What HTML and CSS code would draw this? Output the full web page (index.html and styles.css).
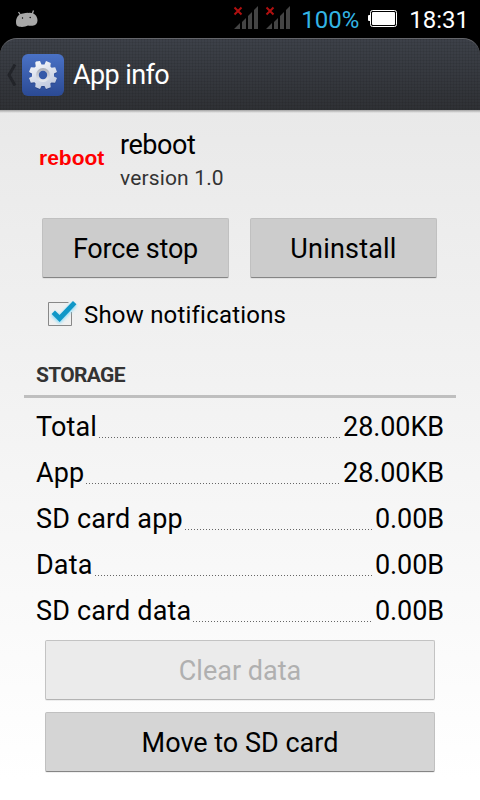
FILE: index.html
```
<!DOCTYPE html>
<html lang="en">
<head>
    <meta charset="UTF-8">
    <meta name="viewport" content="width=device-width, initial-scale=1.0">
    <title>App info</title>
    <link rel="stylesheet" href="styles.css">
</head>
<body>
    <div class="status-bar">
        <svg class="droid" width="24" height="20" viewBox="0 0 24 20">
            <path d="M3.500 3l2 3M18.500 1.500l-1.500 4" stroke="#a8a8a8" stroke-width="1.3"/>
            <path d="M1 13C1 8 4 5 8 4.500q3-.8 6-.6C19 3.500 22.500 7 22.500 11.500c0 3-2 5-5 5.200-2 .2-3 .2-4.500-.1-2 1.300-5.500 1.500-8.500 1.200C2 17.500 1 16 1 13z" fill="#a8a8a8"/>
            <circle cx="7.500" cy="9" r=".7"/>
            <circle cx="15.200" cy="8.500" r=".7"/>
        </svg>
        <div class="status-right">
            <svg class="signal" width="26" height="24" viewBox="0 0 26 24">
                <path d="M1 23h6v-6zM9 23h4V12l-4 4zM15 23h4V6l-4 4zM21 23h4V0l-4 4z" fill="#444"/>
                <path d="M1.500 1.500l7 7M8.500 1.500l-7 7" stroke="#b01010" stroke-width="2"/>
            </svg>
            <svg class="signal" width="26" height="24" viewBox="0 0 26 24">
                <path d="M1 23h6v-6zM9 23h4V12l-4 4zM15 23h4V6l-4 4zM21 23h4V0l-4 4z" fill="#444"/>
                <path d="M1.500 1.500l7 7M8.500 1.500l-7 7" stroke="#b01010" stroke-width="2"/>
            </svg>
            <span class="percent">100%</span>
            <svg class="battery" width="29" height="18" viewBox="0 0 29 18">
                <rect x="2.500" y=".5" width="26" height="16" rx="2" fill="#000" stroke="#fff"/>
                <rect x="4" y="2" width="23" height="13" rx="1" fill="#fff"/>
                <rect x="0" y="5" width="3" height="6" rx="1" fill="#fff"/>
            </svg>
            <span class="clock">18:31</span>
        </div>
    </div>

    <div class="action-bar">
        <svg class="back" width="11" height="22" viewBox="0 0 11 22">
            <path d="M9 .5L3 11l6 10.500" fill="none" stroke="#222429" stroke-width="3"/>
        </svg>
        <svg class="settings-icon" width="42" height="42" viewBox="0 0 42 42">
            <defs>
                <linearGradient id="tile" x1="0" y1="0" x2="0" y2="1">
                    <stop offset="0" stop-color="#4a72c6"/>
                    <stop offset="1" stop-color="#2b4a94"/>
                </linearGradient>
                <linearGradient id="metal" gradientUnits="userSpaceOnUse" x1="14" y1="7" x2="26" y2="35">
                    <stop offset="0" stop-color="#f6f7fa"/>
                    <stop offset="1" stop-color="#bdc7dd"/>
                </linearGradient>
                <linearGradient id="ring" x1="0" y1="0" x2="0" y2="1">
                    <stop offset="0" stop-color="#a9adb8"/>
                    <stop offset="1" stop-color="#e8ebf1"/>
                </linearGradient>
                <path id="gear" d="M14 7.500L18 7l1.500 3.500h3L24 7l4.800 1.900-.4 3.600 1.200 1.200 3.600-.5L35 18l-3 1.500v3L35 24l-1.900 4.800-3.600-.4-1.200 1.200.5 3.600L24 35l-1.500-3h-3L18 35l-4.800-1.900.4-3.600-1.200-1.200-3.600.5L7 24l3-1.500v-3L7 18l1.900-4.800 3.600.4 1.200-1.200-.5-3.600z"/>
            </defs>
            <rect width="42" height="42" rx="6" fill="url(#tile)"/>
            <use href="#gear" fill="#1f3672" opacity=".45" transform="translate(0 1)"/>
            <use href="#gear" fill="url(#metal)"/>
            <circle cx="21" cy="21" r="7" fill="url(#ring)"/>
            <circle cx="21" cy="21" r="4.200" fill="#3459a8"/>
        </svg>
        <h1>App info</h1>
    </div>

    <div class="content">
        <div class="app-header">
            <div class="app-icon">reboot</div>
            <div>
                <div class="app-name">reboot</div>
                <div class="app-version">version 1.0</div>
            </div>
        </div>

        <div class="button-row">
            <button class="stop">Force stop</button>
            <button class="uninstall">Uninstall</button>
        </div>

        <div class="notify">
            <svg width="36" height="36" viewBox="0 0 36 36">
                <defs>
                    <filter id="glow" x="-30%" y="-30%" width="160%" height="160%">
                        <feGaussianBlur stdDeviation="1.800"/>
                    </filter>
                </defs>
                <path d="M25.500 6.500H5.500v23h23V16" fill="none" stroke="#888"/>
                <path d="M10 17.500l6.500 6L31.500 8" fill="none" stroke="#8fdcf7" stroke-width="6" filter="url(#glow)"/>
                <path d="M10.300 16.300l6.300 6.200L31.700 6.700" fill="none" stroke="#0f97c7" stroke-width="4.800"/>
            </svg>
            <span>Show notifications</span>
        </div>

        <h2>STORAGE</h2>
        <div class="storage">
            <div class="row"><span>Total</span><i></i><span class="value">28.00KB</span></div>
            <div class="row"><span>App</span><i></i><span class="value">28.00KB</span></div>
            <div class="row"><span>SD card app</span><i></i><span class="value">0.00B</span></div>
            <div class="row"><span>Data</span><i></i><span class="value">0.00B</span></div>
            <div class="row"><span>SD card data</span><i></i><span class="value">0.00B</span></div>
        </div>

        <div class="button-column">
            <button disabled>Clear data</button>
            <button>Move to SD card</button>
        </div>
    </div>
</body>
</html>
```
FILE: styles.css
```
* {
    box-sizing: border-box;
}
body {
    margin: 0;
    width: 480px;
    height: 800px;
    overflow: hidden;
    background: #000;
    color: #000;
    font-family: Roboto, sans-serif;
    font-size: 27px;
}
.status-bar {
    display: flex;
    justify-content: space-between;
    height: 38px;
    padding: 0 11px 0 15px;
    font-size: 24px;
    line-height: 40px;
}
.droid {
    margin-top: 9px;
}
.status-right {
    display: flex;
}
.signal {
    margin: 6px 6px 0 0;
}
.percent {
    margin-left: 4px;
    color: #33b5e5;
}
.battery {
    margin: 10px 12px 0 9px;
}
.clock {
    color: #fff;
}
.action-bar {
    display: flex;
    align-items: center;
    height: 72px;
    padding-left: 6px;
    border-top: 1px solid #65666b;
    border-radius: 17px 17px 0 0;
    background:
        repeating-linear-gradient(90deg, rgba(0, 0, 0, .07) 0 1px, transparent 1px 3px),
        repeating-linear-gradient(rgba(0, 0, 0, .07) 0 1px, transparent 1px 3px),
        linear-gradient(#3d4149, #2f3135);
    color: #fff;
}
.settings-icon {
    margin: 0 9px 0 5px;
}
h1 {
    margin: 0;
    font-size: 27px;
    font-weight: normal;
    letter-spacing: -.6px;
}
.content {
    height: 690px;
    padding: 17px 24px 0;
    background: linear-gradient(rgba(0, 0, 0, .3), rgba(0, 0, 0, 0)) 0 0 / 100% 3px no-repeat,
        linear-gradient(#e9e9e9, #fff 97%);
}
.app-header {
    display: flex;
    height: 91px;
}
.app-icon {
    width: 96px;
    padding: 18px 0 0 15px;
    color: #f00;
    font: bold 21px/26px "Liberation Sans", sans-serif;
}
.app-name {
    line-height: 37px;
    letter-spacing: -.45px;
}
.app-version {
    color: #333;
    font-size: 21px;
    line-height: 29px;
    letter-spacing: .15px;
}
.button-row {
    display: flex;
    gap: 21px;
    padding: 0 19px 0 18px;
}
button {
    flex: 1;
    height: 60px;
    padding: 1px 0 0;
    border: 1px solid #c0c0c0;
    border-bottom-color: #858585;
    border-radius: 2px;
    background: #ccc;
    box-shadow: 0 1px 0 rgba(0, 0, 0, .06);
    color: #000;
    font: 27px Roboto, sans-serif;
}
.stop {
    letter-spacing: -.2px;
}
.uninstall {
    letter-spacing: .2px;
}
.notify {
    display: flex;
    align-items: center;
    height: 36px;
    margin-top: 18px;
    padding-left: 19px;
    font-size: 24px;
    letter-spacing: .2px;
}
.notify span {
    margin: 2px 0 0 5px;
}
h2 {
    height: 50px;
    margin: 16px 0 0;
    padding-left: 12px;
    border-bottom: 3px solid #bfbfbf;
    color: #333;
    font-size: 21px;
    line-height: 55px;
    letter-spacing: -.7px;
}
.storage {
    padding: 6px 12px 0;
}
.row {
    display: flex;
    align-items: baseline;
    height: 46px;
    line-height: 47px;
    letter-spacing: .15px;
}
.row .value {
    letter-spacing: -.1px;
}
.row i {
    flex: 1;
    height: 1px;
    margin: 0 2px;
    background: repeating-linear-gradient(90deg, #666 0 1px, transparent 1px 3px);
    transform: translateY(2px);
}
.button-column {
    display: flex;
    flex-direction: column;
    gap: 12px;
    padding: 6px 21px 0;
}
.button-column button {
    flex: none;
    background: #d5d5d5;
}
.button-column button:disabled {
    border-color: #c3c3c3 #c3c3c3 #b3b3b3;
    background: #ebebeb;
    color: #b0b0b0;
}
```
